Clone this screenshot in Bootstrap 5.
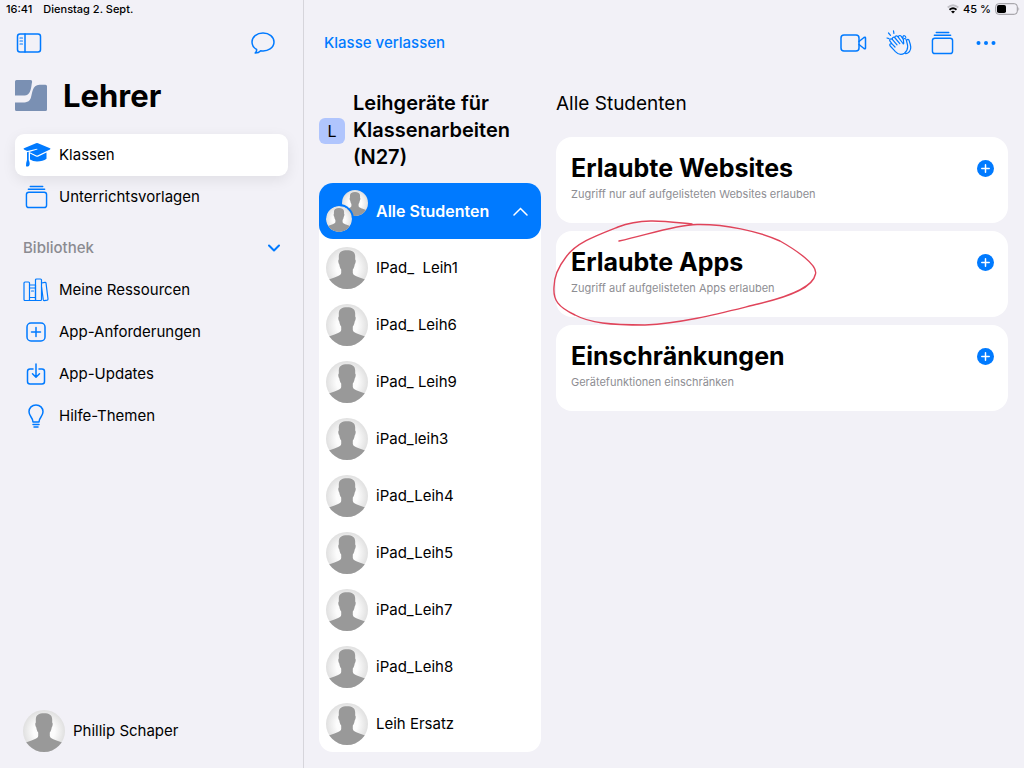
<!DOCTYPE html>
<html lang="de">
<head>
<meta charset="utf-8">
<meta name="viewport" content="width=device-width, initial-scale=1">
<title>Lehrer</title>
<link href="https://cdn.jsdelivr.net/npm/bootstrap@5.3.0/dist/css/bootstrap.min.css" rel="stylesheet">
<style>
:root{--accent:#007aff;--canvas:#f2f1f7;--edge:15px}
body{background:var(--canvas);color:#000;font-family:Inter,"Liberation Sans",sans-serif;font-size:15px;line-height:20px}
svg{display:block;flex:none}
.ic{fill:none;stroke:var(--accent);stroke-width:1.5;stroke-linecap:round;stroke-linejoin:round}
.ic.fine{stroke-width:1.2}
.ic.strong{stroke-width:2}
.sidebar{width:304px;border-right:1px solid #d6d5db}
.status{height:18px;font-size:11px;font-weight:500}
.status-time{padding-left:6px;gap:11px}
.toolbar{height:50px}
.tools{gap:18px}
.plain{background:none;border:0;padding:0;color:var(--accent)}
.brand{padding:4px var(--edge) 10px}
.brand-title{font-size:31px;line-height:48px;font-weight:700;margin:0}
.side-nav{padding:4px var(--edge)}
.side-link{height:42px;padding-left:8px;border-radius:9px;color:#000;text-decoration:none;gap:10px}
.side-link.active{background:#fff;box-shadow:0 4px 14px rgba(0,0,0,.08)}
.slot{width:26px}
.section-toggle{height:42px;margin-top:9px;padding:0 8px;color:#8b8b91;font-weight:500}
.profile{padding:0 23px 16px}
.work{gap:var(--edge);padding:22px 16px 16px var(--edge)}
.roster{width:222px}
.class-title{font-size:20px;line-height:27px;font-weight:600;margin:0}
.initial{width:26px;height:26px;border-radius:6px;background:#b0c5fd;font-size:16px}
.panel{background:#fff;border-radius:14px}
.all-row{height:56px;width:100%;background:var(--accent);color:#fff;border:0;border-radius:14px;padding:0 13px 0 7px;font-size:16px;font-weight:600}
.student{height:57px;padding-left:7px;gap:8px;white-space:pre}
.pair{width:42px;height:42px}
.front{left:0;bottom:0;border-radius:50%;box-shadow:0 0 0 2px var(--accent)}
.back{right:0;top:0}
.rule-card{min-height:86px;border-radius:16px;padding:15px 14px 15px 15px}
.rule-title{font-size:25px;line-height:32px;font-weight:700;margin:0}
.rule-note{font-size:11px;line-height:20px;color:#8e8e93;margin:0}
.overview-title{font-size:19px;line-height:28px;font-weight:400;margin:0 0 19px}
.annotation{left:-6px;top:-15px;z-index:2;pointer-events:none}
.leave{font-weight:500;text-decoration:none;color:var(--accent)}
</style>
</head>
<body>
<svg width="0" height="0" class="position-absolute" aria-hidden="true">
<defs>
<radialGradient id="halo" cx=".5" cy=".5" r=".5"><stop offset=".5" stop-color="#fcfcfc"/><stop offset="1" stop-color="#e0e0e0"/></radialGradient>
<clipPath id="disc"><circle cx="21" cy="21" r="21"/></clipPath>
<symbol id="person" viewBox="0 0 42 42"><circle cx="21" cy="21" r="21" fill="url(#halo)"/><path clip-path="url(#disc)" fill="#999" d="M12.800 9.500C12.800 5 16 3.300 21 3.300s8.200 1.700 8.200 6.200v3c.9.500.6 3.500-.5 5-.3 2-.8 3.700-1.900 5v3.500c.3 2.200 3 3.200 6.700 4.400l8.500 3V42H0v-8.600l8.500-3c3.500-1.200 6.400-2.200 6.700-4.400v-3.500c-1.100-1.300-1.600-3-1.900-5-1.100-1.500-1.400-4.500-.5-5z"/></symbol>
<symbol id="stack" viewBox="0 0 24 24"><rect x="1.500" y="7" width="21" height="16" rx="2.500"/><path d="M3.500 4h17M5.500 1h13"/></symbol>
<symbol id="plus-disc" viewBox="0 0 16 16"><circle cx="8" cy="8" r="8" fill="#007aff"/><path d="M8 4.500v7M4.500 8h7" stroke="#fff" stroke-width="1.400" stroke-linecap="round"/></symbol>
</defs>
</svg>
<div class="d-flex min-vh-100">
<aside class="sidebar d-flex flex-column flex-shrink-0">
  <div class="status status-time d-flex align-items-center"><span>16:41</span><span>Dienstag 2. Sept.</span></div>
  <div class="toolbar d-flex align-items-center justify-content-between px-3">
    <button class="plain" aria-label="Seitenleiste"><svg class="ic" width="26" height="20" viewBox="0 0 26 20"><rect x="1.500" y="1" width="23" height="18" rx="2.500"/><path d="M9 1v18"/><path d="M4 5h2.500M4 8h2.500M4 11h2.500" stroke-width="1.200"/></svg></button>
    <button class="plain me-2 pe-1" aria-label="Nachrichten"><svg class="ic" width="24" height="22" viewBox="0 0 24 22"><path d="M12 1C5.700 1 1 5 1 10c0 3.200 1.600 5.700 4.600 7.400.3 1.300-.3 2.500-1.400 3.600 2.200 0 4.300-.9 5.500-2.300 7.300 1.100 13.300-3 13.300-8.700 0-5-4.700-9-11-9z"/></svg></button>
  </div>
  <div class="brand d-flex align-items-center gap-3">
    <svg width="32" height="32" viewBox="0 0 32 32" fill="#7a90b3"><path d="M1.500 0H15.500q2 0 1.600 2C16.300 5 16.500 10 14 13.300 12.500 15.300 10.500 15.600 7.500 15.600H0V1.500Q0 0 1.500 0z"/><path d="M24.500 4.800H30.500q1.500 0 1.500 1.500V29.500q0 1.500-1.500 1.500H1.500Q0 31 0 29.500V22.500H8c4.500 0 6.700-1.500 7.800-4.500C17.500 13.500 17 4.800 24.500 4.800z"/></svg>
    <h1 class="brand-title">Lehrer</h1>
  </div>
  <nav class="side-nav" aria-label="Hauptnavigation">
    <a href="#" class="side-link active d-flex align-items-center"><span class="slot"><svg width="28" height="26" viewBox="0 0 28 26" fill="#007aff"><path d="M13 1.200q1-.5 2 0l12 5q1 .6 0 1.200l-12 5.800q-1 .4-2 0L6.300 10l8-2.500q.5-.6-.3-.8L4.200 9.100 1 7.400q-1-.6 0-1.200z"/><path d="M7 11.500l6 2.900q1.200.5 2.400 0l8.100-3.900v6.200q-3.500 2.700-9.500 2.700-4 0-7-1.900z"/><path d="M4 10.300l1.700-.5v8.200q1.800 3.500.3 6-2.500 1-3 0 0-3.500 1-6z"/></svg></span>Klassen</a>
    <a href="#" class="side-link d-flex align-items-center"><span class="slot"><svg class="ic mx-auto" width="23" height="24"><use href="#stack"/></svg></span>Unterrichtsvorlagen</a>
    <button class="plain section-toggle w-100 d-flex align-items-center justify-content-between">Bibliothek<svg class="ic strong" width="12" height="8" viewBox="0 0 12 8"><path d="M1 1.500l5 5 5-5"/></svg></button>
    <a href="#" class="side-link d-flex align-items-center"><span class="slot"><svg class="ic fine" width="26" height="24" viewBox="0 0 26 24"><rect x="1" y="4" width="5.500" height="18.500" rx="1"/><path d="M6.500 7h6v15.500h-6M6.500 10h6M6.500 19.500h6M8.500 13h2"/><rect x="12.500" y="1" width="6" height="21.500" rx="1"/><path d="M18.500 5l3.500-.7q.8-.1 1 .7L25 21q0 1-.8 1.200l-2.900.5q-.8 0-1-.8L18.500 9"/></svg></span>Meine Ressourcen</a>
    <a href="#" class="side-link d-flex align-items-center"><span class="slot"><svg class="ic mx-auto" width="20" height="20" viewBox="0 0 20 20"><rect x="1" y="1" width="18" height="18" rx="4"/><path d="M10 5.500v9M5.500 10h9"/></svg></span>App-Anforderungen</a>
    <a href="#" class="side-link d-flex align-items-center"><span class="slot"><svg class="ic mx-auto" width="20" height="22" viewBox="0 0 20 22"><path d="M7 6H4Q1.500 6 1.500 8.500v10Q1.500 21 4 21h12q2.500 0 2.500-2.500v-10Q18.500 6 16 6h-3M10 1v13M6.500 10.800L10 14.300l3.500-3.500"/></svg></span>App-Updates</a>
    <a href="#" class="side-link d-flex align-items-center"><span class="slot"><svg class="ic mx-auto" width="16" height="24" viewBox="0 0 16 24"><path d="M5 18c0-4.500-4-5.500-4-10.200C1 3.800 4 1 8 1s7 2.800 7 6.800C15 12.500 11 13.500 11 18zM5 20.500h6M6 23h4"/></svg></span>Hilfe-Themen</a>
  </nav>
  <div class="profile mt-auto d-flex align-items-center gap-2"><svg width="42" height="42"><use href="#person"/></svg><span>Phillip Schaper</span></div>
</aside>
<div class="flex-grow-1 d-flex flex-column">
  <div class="status d-flex align-items-center justify-content-end gap-1 pe-1">
    <svg width="12" height="10" viewBox="0 0 12 10" fill="none" stroke-width="1.800"><path d="M.7 3.500q5.300-4.600 10.600 0" stroke="#c3c2c8"/><path d="M2.500 5.700q3.500-3 7 0" stroke="#000"/><path d="M6 9.500L4 7.500q2-1.500 4 0z" fill="#000"/></svg>
    <span>45 %</span>
    <svg width="25" height="12" viewBox="0 0 25 12"><rect x=".7" y=".7" width="21.600" height="10.600" rx="3" fill="none" stroke="#98979c"/><rect x="2" y="2" width="9" height="8" rx="1.800"/><path d="M23.500 4q1.500 2 0 4z" fill="#98979c"/></svg>
  </div>
  <header class="toolbar d-flex align-items-center justify-content-between ps-3 pe-4">
    <a href="#" class="leave ms-1">Klasse verlassen</a>
    <div class="tools d-flex align-items-center me-1">
      <button class="plain" aria-label="Video"><svg class="ic" width="27" height="20" viewBox="0 0 27 20"><rect x="1" y="2" width="18" height="16" rx="3"/><path d="M19 8.500l5-4q1.500-.9 1.500.6v9.800q0 1.500-1.500.6l-5-4"/></svg></button>
      <button class="plain" aria-label="Applaus"><svg class="ic fine" width="28" height="26" viewBox="0 0 28 26"><path d="M8.600 19.700L5.200 16q-1-1.500.4-2.200.9-.5 1.900.6L10 17M7.500 14.500L5 11.200q-.8-1.500.4-2.200 1.100-.6 2.100.6l4.500 5.200M7.500 9.600q-.6-1.400.5-2.100t2.100.5l4.700 5.600M10.100 8q-.5-1.500.6-2 1.100-.6 2.100.7l5.200 6.800q.8.900.7-.4l-.3-3q.1-1.800 1.500-1.600 1 .2 1.400 1.500l1.100 4.500q1.200 5.500-3 8.700-4.500 3.100-9-1.500l-1.800-2"/><path d="M13.500 7.200q-.1-1.700 1.400-1.700.8 0 1.400.8l2 3M18 8V6.700q.4-1.500 1.600-.9.900.4 1.200 1.500M22 10q.8-1.400 2 .2l1.300 4.300q1.600 5.500-2.200 8.300-1.200.8-2.600.8M2 8l2 .6M3.500 3l2 2.400M8.500.9l.4 2.500"/></svg></button>
      <button class="plain" aria-label="Vorlagen"><svg class="ic" width="23" height="24"><use href="#stack"/></svg></button>
      <button class="plain ms-1" aria-label="Mehr"><svg width="20" height="6" viewBox="0 0 20 6" fill="#007aff"><circle cx="2.500" cy="3" r="2"/><circle cx="10" cy="3" r="2"/><circle cx="17.500" cy="3" r="2"/></svg></button>
    </div>
  </header>
  <main class="work d-flex flex-grow-1">
    <section class="roster flex-shrink-0" aria-label="Klasse">
      <div class="d-flex align-items-center gap-2 mb-2 pb-1"><span class="initial d-flex align-items-center justify-content-center flex-shrink-0">L</span><h2 class="class-title">Leihgeräte für Klassenarbeiten (N27)</h2></div>
      <div class="panel">
        <button class="all-row d-flex align-items-center gap-2"><span class="pair position-relative flex-shrink-0"><svg class="back position-absolute" width="26" height="26"><use href="#person"/></svg><svg class="front position-absolute" width="26" height="26"><use href="#person"/></svg></span><span>Alle Studenten</span><svg class="ms-auto" width="15" height="9" viewBox="0 0 15 9" fill="none" stroke="#fff" stroke-width="1.500" stroke-linecap="round"><path d="M1 8l6.500-6.500L14 8"/></svg></button>
        <ul class="list-unstyled mb-0">
          <li class="student d-flex align-items-center"><svg width="42" height="42"><use href="#person"/></svg><span>IPad_  Leih1</span></li>
          <li class="student d-flex align-items-center"><svg width="42" height="42"><use href="#person"/></svg><span>iPad_ Leih6</span></li>
          <li class="student d-flex align-items-center"><svg width="42" height="42"><use href="#person"/></svg><span>iPad_ Leih9</span></li>
          <li class="student d-flex align-items-center"><svg width="42" height="42"><use href="#person"/></svg><span>iPad_leih3</span></li>
          <li class="student d-flex align-items-center"><svg width="42" height="42"><use href="#person"/></svg><span>iPad_Leih4</span></li>
          <li class="student d-flex align-items-center"><svg width="42" height="42"><use href="#person"/></svg><span>iPad_Leih5</span></li>
          <li class="student d-flex align-items-center"><svg width="42" height="42"><use href="#person"/></svg><span>iPad_Leih7</span></li>
          <li class="student d-flex align-items-center"><svg width="42" height="42"><use href="#person"/></svg><span>iPad_Leih8</span></li>
          <li class="student d-flex align-items-center"><svg width="42" height="42"><use href="#person"/></svg><span>Leih Ersatz</span></li>
        </ul>
      </div>
    </section>
    <section class="flex-grow-1" aria-label="Regeln">
      <h2 class="overview-title">Alle Studenten</h2>
      <div class="d-flex flex-column gap-2">
        <article class="panel rule-card d-flex justify-content-between">
          <div><h3 class="rule-title">Erlaubte Websites</h3><p class="rule-note">Zugriff nur auf aufgelisteten Websites erlauben</p></div>
          <button class="plain align-self-start pt-2" aria-label="Website hinzufügen"><svg width="17" height="17"><use href="#plus-disc"/></svg></button>
        </article>
        <article class="panel rule-card d-flex justify-content-between position-relative">
          <div><h3 class="rule-title">Erlaubte Apps</h3><p class="rule-note">Zugriff auf aufgelisteten Apps erlauben</p></div>
          <button class="plain align-self-start pt-2" aria-label="App hinzufügen"><svg width="17" height="17"><use href="#plus-disc"/></svg></button>
          <svg class="annotation position-absolute" width="270" height="112" viewBox="550 216 270 112" fill="none" stroke="#e0445a" stroke-width="1.400" stroke-linecap="round" aria-hidden="true"><path d="M619 241C650 234 675 225 697 224.500C725 224 758 231 780 241C796 250 818 265 815.500 274C813 287 792 296 758 304C725 312 685 323 645 325C610 325 590 323 575 315C558 307 553 300 554 287C554 275 559 266 566 257C576 243 595 236 618 227C643 217 670 222 692 224"/></svg>
        </article>
        <article class="panel rule-card d-flex justify-content-between">
          <div><h3 class="rule-title">Einschränkungen</h3><p class="rule-note">Gerätefunktionen einschränken</p></div>
          <button class="plain align-self-start pt-2" aria-label="Einschränkung hinzufügen"><svg width="17" height="17"><use href="#plus-disc"/></svg></button>
        </article>
      </div>
    </section>
  </main>
</div>
</div>
<script src="https://cdn.jsdelivr.net/npm/bootstrap@5.3.0/dist/js/bootstrap.bundle.min.js"></script>
</body>
</html>
